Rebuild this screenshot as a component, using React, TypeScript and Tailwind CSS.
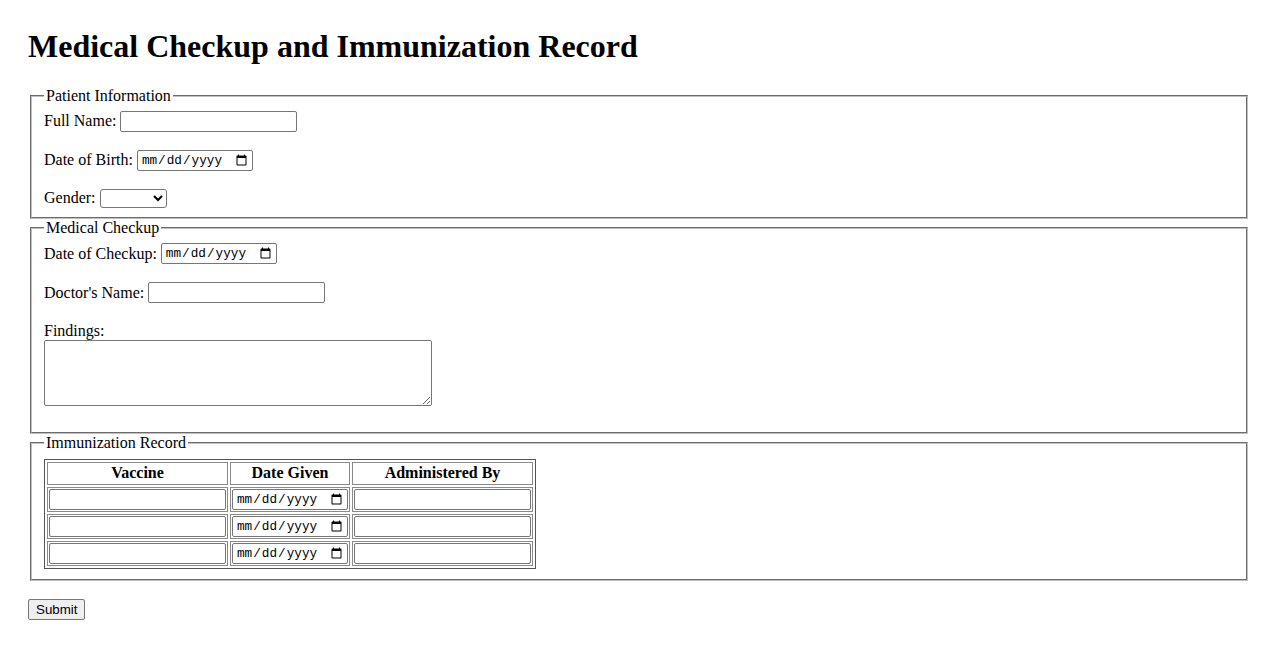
import React from 'react';

// Campos de texto y fecha con el aspecto nativo de Chrome
const textInput =
  "h-[21px] w-[177px] rounded-[2px] border border-[#767676] bg-white px-[2px] py-[1px] font-['Liberation_Sans',Arial,sans-serif] text-[13.33px] text-black";
const dateInput =
  "h-[21px] w-[116px] rounded-[2px] border border-[#767676] bg-white pl-[3px] pr-[2px] font-['Liberation_Mono','Courier_New',monospace] text-[12.7px] text-black";
const fieldset =
  "mx-[2px] border-2 border-[#c0c0c0] [border-style:groove] px-[12px] pt-[5.6px]";
const cell = 'border border-[#8a8a8a] p-[1px]';

const vaccineRows = [0, 1, 2];

export default function App() {
  return (
    <div className="min-h-[650px] bg-white px-[28px] pt-[28px] font-['Liberation_Serif','Times_New_Roman',serif] text-[16px] leading-[normal] text-black">
      <h1 className="mb-[22px] text-[32px] font-bold leading-[normal]">
        Medical Checkup and Immunization Record
      </h1>

      <form onSubmit={(e) => e.preventDefault()}>
        {/* Datos del paciente */}
        <fieldset className={`${fieldset} pb-[9px]`}>
          <legend className="px-[2px]">Patient Information</legend>
          <div className="flex h-[21px] items-center gap-[4px]">
            <label>Full Name:</label>
            <input type="text" className={textInput} />
          </div>
          <div className="mt-[18px] flex h-[21px] items-center gap-[4px]">
            <label>Date of Birth:</label>
            <input type="date" className={dateInput} />
          </div>
          <div className="mt-[18px] flex h-[19px] items-center gap-[4px]">
            <label>Gender:</label>
            <select className="h-[19px] w-[67px] rounded-[3px] border border-[#767676] bg-white font-['Liberation_Sans',Arial,sans-serif] text-[13.33px]">
              <option></option>
              <option>Male</option>
              <option>Female</option>
              <option>Other</option>
            </select>
          </div>
        </fieldset>

        {/* Revisión médica */}
        <fieldset className={`${fieldset} pb-[10px]`}>
          <legend className="px-[2px]">Medical Checkup</legend>
          <div className="mt-[1px] flex h-[21px] items-center gap-[4px]">
            <label>Date of Checkup:</label>
            <input type="date" className={dateInput} />
          </div>
          <div className="mt-[18px] flex h-[21px] items-center gap-[4px]">
            <label>Doctor's Name:</label>
            <input type="text" className={textInput} />
          </div>
          <div className="mt-[19px]">
            <label>Findings:</label>
          </div>
          <textarea className="mb-[16px] block h-[66px] w-[388px] rounded-[2px] border border-[#767676] bg-white p-[2px] font-['Liberation_Mono',monospace] text-[13.33px]" />
        </fieldset>

        {/* Registro de vacunas */}
        <fieldset className={`${fieldset} pb-[10px]`}>
          <legend className="px-[2px]">Immunization Record</legend>
          <table className="mt-[1px] border-separate border-spacing-[2px] border border-[#555]">
            <thead>
              <tr>
                <th className={`${cell} h-[23px]`}>Vaccine</th>
                <th className={`${cell} h-[23px]`}>Date Given</th>
                <th className={`${cell} h-[23px]`}>Administered By</th>
              </tr>
            </thead>
            <tbody>
              {vaccineRows.map((i) => (
                <tr key={i}>
                  <td className={cell}>
                    <input type="text" className={`block ${textInput}`} />
                  </td>
                  <td className={cell}>
                    <input type="date" className={`block ${dateInput} w-[115px]`} />
                  </td>
                  <td className={cell}>
                    <input type="text" className={`block ${textInput}`} />
                  </td>
                </tr>
              ))}
            </tbody>
          </table>
        </fieldset>

        <button
          type="submit"
          className="mt-[18px] block h-[21px] w-fit rounded-[2px] border border-[#767676] bg-[#efefef] px-[7px] font-['Liberation_Sans',Arial,sans-serif] text-[13.33px] text-black"
        >
          Submit
        </button>
      </form>
    </div>
  );
}
